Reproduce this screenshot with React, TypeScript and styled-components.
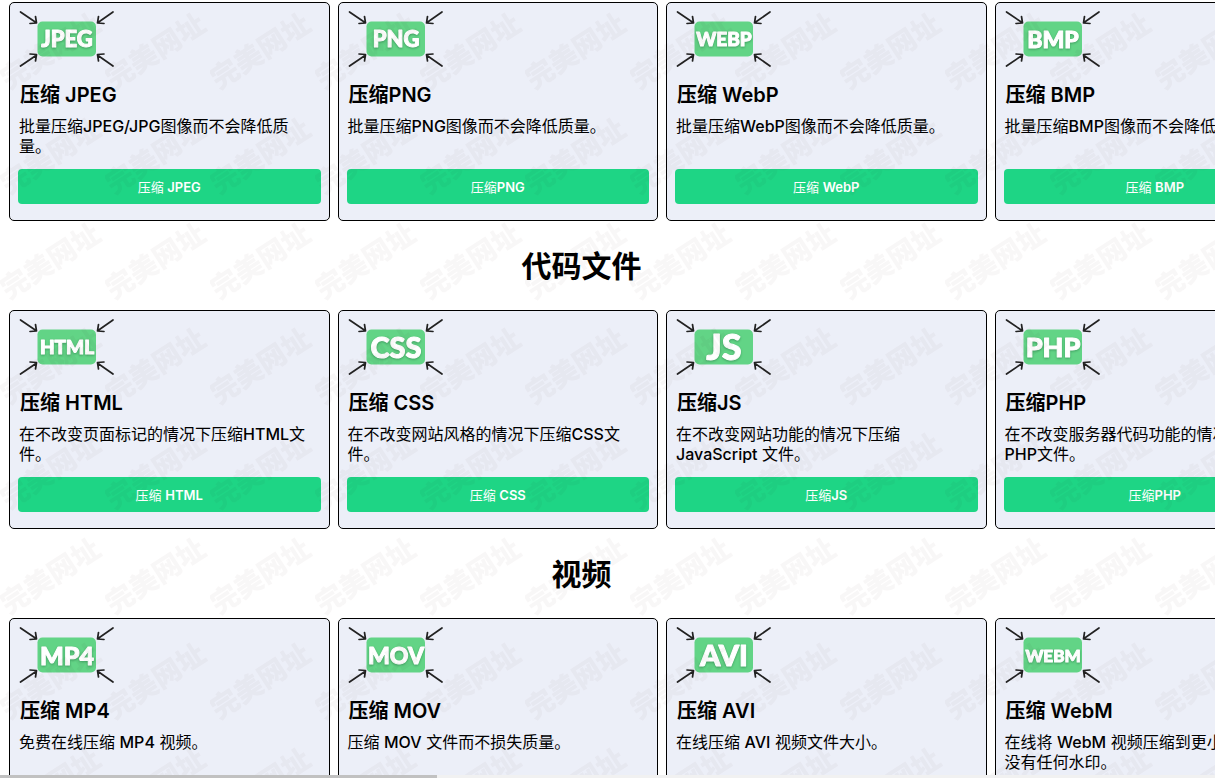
import React from 'react';
import styled, { createGlobalStyle } from 'styled-components';

const GlobalStyle = createGlobalStyle`
  *, *::before, *::after { box-sizing: border-box; }
  body {
    margin: 0;
    background: #fff;
    color: #000;
    font-family: Inter, "Noto Sans CJK SC", sans-serif;
  }
`;

const Page = styled.div`
  position: relative;
  display: flex;
  flex-direction: column;
  height: 100vh;
  overflow: hidden;
`;

const Content = styled.main`
  flex: 1;
  min-height: 0;
  overflow: hidden;
  padding: 2px 0 0 9px;
`;

const SectionTitle = styled.h2`
  margin: 0;
  padding: 23px 61px 22px 0;
  font-size: 30px;
  line-height: 44px;
  font-weight: 700;
  text-align: center;
`;

const CardGrid = styled.div`
  display: grid;
  grid-template-columns: repeat(4, 1fr);
  gap: 8px;
  width: calc(100% + 100px);
`;

const Card = styled.article`
  display: flex;
  flex-direction: column;
  min-height: 219px;
  padding: 8px 8px 16px;
  border: 1px solid #000;
  border-radius: 5px;
  background: #eceff8;
`;

const Badge = styled.svg`
  display: block;
  width: 96px;
  height: 56px;
  margin-left: 1px;
`;

const BadgeText = styled.text`
  font-family: Lato, sans-serif;
  font-weight: 900;
  fill: #fff;
  stroke: #fff;
  stroke-width: 1px;
  stroke-linejoin: round;
  filter: drop-shadow(0 1px 1px rgba(0, 60, 30, 0.35));
`;

const CardTitle = styled.h3`
  margin: 15px 0 0;
  padding-left: 2px;
  font-size: 20px;
  line-height: 26px;
  font-weight: 600;
`;

const CardText = styled.p`
  flex: 1;
  margin: 8px 0 0;
  padding: 0 8px 0 1px;
  font-size: 16px;
  line-height: 20px;
  font-weight: 400;
`;

const Latin = styled.span<{ $weight: number }>`
  font-weight: ${(p) => p.$weight};
`;

const CardButton = styled.button`
  height: 35px;
  padding: 0;
  border: 0;
  border-radius: 4px;
  background: #1ed585;
  color: #fff;
  font-family: inherit;
  font-size: 13px;
  font-weight: 400;
  cursor: pointer;
`;

const Watermark = styled.svg`
  position: absolute;
  inset: 0;
  width: 100%;
  height: 100%;
  pointer-events: none;
`;

const WatermarkText = styled.text`
  font-family: "Noto Sans CJK SC", sans-serif;
  font-size: 28px;
  font-weight: 900;
  fill: #201010;
  fill-opacity: 0.03;
`;

const ScrollTrack = styled.div`
  position: relative;
  flex: none;
  height: 3px;
  background: #f1f1f1;
`;

const ScrollThumb = styled.div`
  width: 36%;
  height: 3px;
  background: #c1c1c1;
`;

interface Tool {
  label: string;
  size: number;
  title: string;
  text: string;
  action?: string;
}

interface ToolSection {
  heading?: string;
  tools: Tool[];
}

const sections: ToolSection[] = [
  {
    tools: [
      { label: 'JPEG', size: 22, title: '压缩 JPEG', text: '批量压缩JPEG/JPG图像而不会降低质量。', action: '压缩 JPEG' },
      { label: 'PNG', size: 22, title: '压缩PNG', text: '批量压缩PNG图像而不会降低质量。', action: '压缩PNG' },
      { label: 'WEBP', size: 19, title: '压缩 WebP', text: '批量压缩WebP图像而不会降低质量。', action: '压缩 WebP' },
      { label: 'BMP', size: 23, title: '压缩 BMP', text: '批量压缩BMP图像而不会降低质量。', action: '压缩 BMP' },
    ],
  },
  {
    heading: '代码文件',
    tools: [
      { label: 'HTML', size: 19, title: '压缩 HTML', text: '在不改变页面标记的情况下压缩HTML文件。', action: '压缩 HTML' },
      { label: 'CSS', size: 29, title: '压缩 CSS', text: '在不改变网站风格的情况下压缩CSS文件。', action: '压缩 CSS' },
      { label: 'JS', size: 36, title: '压缩JS', text: '在不改变网站功能的情况下压缩 JavaScript 文件。', action: '压缩JS' },
      { label: 'PHP', size: 27, title: '压缩PHP', text: '在不改变服务器代码功能的情况下压缩PHP文件。', action: '压缩PHP' },
    ],
  },
  {
    heading: '视频',
    tools: [
      { label: 'MP4', size: 25, title: '压缩 MP4', text: '免费在线压缩 MP4 视频。' },
      { label: 'MOV', size: 23, title: '压缩 MOV', text: '压缩 MOV 文件而不损失质量。' },
      { label: 'AVI', size: 29, title: '压缩 AVI', text: '在线压缩 AVI 视频文件大小。' },
      { label: 'WEBM', size: 17, title: '压缩 WebM', text: '在线将 WebM 视频压缩到更小的尺寸，没有任何水印。' },
    ],
  },
];

function MixedText({ text, weight }: { text: string; weight: number }) {
  return (
    <>
      {text.split(/([A-Za-z0-9/]+)/).map((part, i) =>
        i % 2 ? (
          <Latin key={i} $weight={weight}>
            {part}
          </Latin>
        ) : (
          part
        ),
      )}
    </>
  );
}

function FormatBadge({ label, size }: { label: string; size: number }) {
  return (
    <Badge viewBox="0 0 96 56" role="img" aria-label={label}>
      <g fill="none" stroke="#222" strokeWidth="1.7" strokeLinecap="round" strokeLinejoin="round">
        <path d="M1.5 1 L17 11.5 M16.5 5.5 L17.5 12 L11 12.5" />
        <path d="M94 1 L79 11.5 M79.5 5.5 L78.5 12 L85 12.5" />
        <path d="M1.5 55 L17 44.5 M11 43 L17.5 43.5 L16.5 50" />
        <path d="M94 55 L79 44.5 M85 43 L78.5 43.5 L79.5 50" />
      </g>
      <rect x="18.5" y="10.5" width="58.5" height="35" rx="5" fill="#62d486" />
      <BadgeText x="48" y={28.5 + size * 0.36} textAnchor="middle" fontSize={size}>
        {label}
      </BadgeText>
    </Badge>
  );
}

function ToolCard({ tool }: { tool: Tool }) {
  return (
    <Card>
      <FormatBadge label={tool.label} size={tool.size} />
      <CardTitle>{tool.title}</CardTitle>
      <CardText>
        <MixedText text={tool.text} weight={500} />
      </CardText>
      {tool.action && (
        <CardButton type="button">
          <MixedText text={tool.action} weight={600} />
        </CardButton>
      )}
    </Card>
  );
}

export default function App() {
  return (
    <Page>
      <GlobalStyle />
      <Content>
        {sections.map((section, i) => (
          <section key={i}>
            {section.heading && <SectionTitle>{section.heading}</SectionTitle>}
            <CardGrid>
              {section.tools.map((tool) => (
                <ToolCard key={tool.label} tool={tool} />
              ))}
            </CardGrid>
          </section>
        ))}
      </Content>
      <Watermark aria-hidden="true">
        <defs>
          <pattern id="wm" width="105" height="105" patternUnits="userSpaceOnUse">
            <WatermarkText x="50" y="60" textAnchor="middle" transform="rotate(-33 52 50)">
              完美网址
            </WatermarkText>
          </pattern>
        </defs>
        <rect width="100%" height="100%" fill="url(#wm)" />
      </Watermark>
      <ScrollTrack>
        <ScrollThumb />
      </ScrollTrack>
    </Page>
  );
}
